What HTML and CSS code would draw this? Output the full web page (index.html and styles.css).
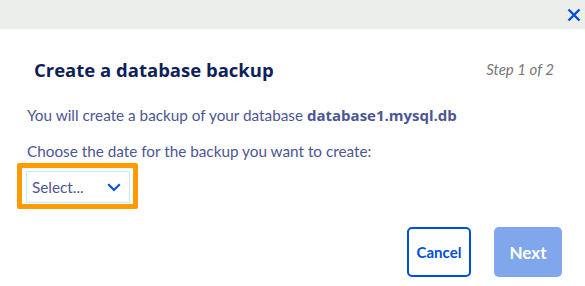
FILE: index.html
```html
<!DOCTYPE html>
<html>

<head>
    <title>Create a database backup</title>
    <link rel="stylesheet" href="styles.css">
</head>

<body>
    <div class="modal">
        <div class="modal-top">
            <button class="close" aria-label="Close">
                <svg width="14" height="14" viewBox="0 0 14 14">
                    <path d="M1.5 1.5L12.5 12.5M12.5 1.5L1.5 12.5" stroke="#0050d7" stroke-width="2.4" fill="none"/>
                </svg>
            </button>
        </div>

        <div class="modal-head">
            <h1>Create a database backup</h1>
            <span class="step">Step 1 of 2</span>
        </div>

        <div class="modal-body">
            <p>You will create a backup of your database <strong>database1.mysql.db</strong></p>
            <p>Choose the date for the backup you want to create:</p>

            <div class="highlight">
                <div class="select">
                    <span>Select...</span>
                    <svg width="14" height="9" viewBox="0 0 14 9">
                        <path d="M1.2 1.2L7 7L12.8 1.2" stroke="#0050d7" stroke-width="2" fill="none"/>
                    </svg>
                </div>
            </div>
        </div>

        <div class="modal-foot">
            <button class="btn btn-outline">Cancel</button>
            <button class="btn btn-primary" disabled>Next</button>
        </div>
    </div>
</body>

</html>
```

FILE: styles.css
```css
body {
    margin: 0;
    font-family: Lato, "Open Sans", sans-serif;
    background-color: #ffffff;
    color: #4d5693;
}

.modal-top {
    height: 29px;
    background-color: #eceeec;
    display: flex;
    justify-content: flex-end;
    align-items: center;
}

.close {
    background: none;
    border: none;
    padding: 0;
    margin-right: 4px;
    width: 14px;
    height: 14px;
    display: flex;
}

.modal-head {
    display: flex;
    justify-content: space-between;
    align-items: flex-start;
    padding: 29px 31px 0 34px;
}

.modal-head h1 {
    margin: 0;
    font-family: "Open Sans", sans-serif;
    font-size: 18.5px;
    line-height: 24px;
    font-weight: bold;
    color: #0f1f5a;
}

.step {
    font-size: 15px;
    line-height: 22px;
    font-style: italic;
    color: #767676;
}

.modal-body {
    padding: 22px 27px 0 27px;
}

.modal-body p {
    margin: 0 0 14px 0;
    font-size: 15.3px;
    line-height: 22px;
}

.modal-body p strong {
    font-family: "Open Sans", sans-serif;
    font-size: 15px;
    font-weight: bold;
}

.highlight {
    display: flex;
    width: max-content;
    margin-left: -10px;
    margin-top: -13px;
    border: 5px solid #ff9a00;
    border-radius: 2px;
    padding: 3px 3px 1px 4px;
}

.select {
    width: 104px;
    height: 32px;
    border: 1px solid #bfeefc;
    display: flex;
    align-items: center;
    justify-content: space-between;
    padding: 0 8px 0 5px;
    box-sizing: border-box;
    font-size: 15.3px;
}

.modal-foot {
    display: flex;
    justify-content: flex-end;
    gap: 23px;
    padding: 18px 23px 0 0;
}

.btn {
    font-family: inherit;
    font-weight: bold;
    height: 50px;
    border-radius: 5px;
    padding: 0;
}

.btn-outline {
    background-color: #ffffff;
    border: 2px solid #0050d7;
    color: #0050d7;
    font-size: 15px;
    width: 64px;
}

.btn-primary {
    background-color: #80a7ec;
    border: none;
    color: #ffffff;
    font-size: 17px;
    width: 68px;
}
```
